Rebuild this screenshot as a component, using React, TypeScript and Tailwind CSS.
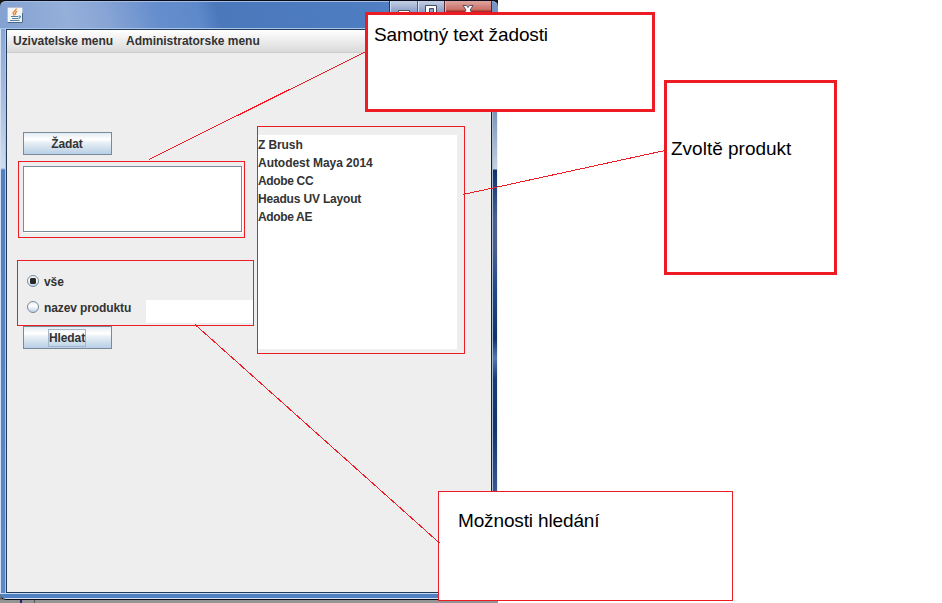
import type { ReactNode } from "react";

const products = [
  { name: "Z Brush", tracking: "tracking-[-0.1px]" },
  { name: "Autodest Maya 2014", tracking: "tracking-[-0.04px]" },
  { name: "Adobe CC", tracking: "tracking-[-0.35px]" },
  { name: "Headus UV Layout", tracking: "tracking-[-0.18px]" },
  { name: "Adobe AE", tracking: "tracking-[-0.35px]" },
];

function JavaIcon() {
  return (
    <svg className="ml-[7px] mt-[6px] h-[16px] w-[16px] shrink-0" viewBox="0 0 16 16" fill="none">
      <rect x=".5" y=".5" width="15" height="15" rx="1" fill="#f4f5f6" stroke="#b4c0cf" />
      <path d="M.5 15.5h15M15.5 6v9" stroke="#476782" />
      <path d="M9.3 1.5C9.6 3.8 5.8 4.4 6.1 6.6L7.5 8.5M10.3 4.3C8 5.3 8 6.5 8.8 7.8" stroke="#ed8730" strokeWidth="1.4" />
      <path d="M4 9.5h7.3M5 11.5h6M3 13.5h9.5M11.7 9c2.7-.3 1.9 2-.2 2.6" stroke="#54809f" strokeWidth="1.1" />
    </svg>
  );
}

function TitleBar() {
  return (
    <header className="flex h-[29px] shrink-0 justify-between rounded-t-[6px] border-t border-[#080b1b] bg-[linear-gradient(75deg,#82a1d2_0%,#95afd9_14%,#86a4d5_22%,#658ecd_32%,#5e89ca_40%,#4b78bb_44%,#4f7dc2_75%,#7894c7_100%)] shadow-[inset_0_1px_0_#a5bddf,inset_0_-1px_0_#a9c7e9]">
      <JavaIcon />
      <div className="mr-[6px] flex h-[18px] text-white">
        <div className="flex w-[28px] justify-center border-l border-[#263653] bg-[linear-gradient(#c4cfe4,#899fc5_60%,#647fac)] shadow-[inset_1px_0_0_#d3def0]">
          <svg className="h-[18px] w-[14px]" viewBox="0 0 14 18"><path d="M1.5 9.5h11v4h-11z" fill="white" stroke="#4c5564" /></svg>
        </div>
        <div className="flex w-[27px] justify-center border-l border-[#52617e] bg-[linear-gradient(#c4cfe4,#899fc5_60%,#647fac)] shadow-[inset_1px_0_0_#d3def0]">
          <svg className="h-[18px] w-[14px]" viewBox="0 0 14 18"><path d="M1.5 4.5h11v10h-11z" fill="white" stroke="#454e61" /><path d="M5.5 7.5h4v4h-4z" fill="#8ba0c4" stroke="#454e61" /></svg>
        </div>
        <div className="flex w-[48px] justify-center border-x border-[#542736] bg-[linear-gradient(#dda69f,#c96d64_50%,#a92e27_55%)] shadow-[inset_1px_0_0_#e5b9b3]">
          <svg className="h-[18px] w-[14px]" viewBox="0 0 14 18"><path d="M2 4.5h3.5L7 6.5l1.5-2H12L9.2 9l3 5H8.5L7 11.5 5.5 14H2l3-5z" fill="white" stroke="#545260" /></svg>
        </div>
      </div>
    </header>
  );
}

function MetalButton({ children, focused = false }: { children: ReactNode; focused?: boolean }) {
  return (
    <button className="flex h-[23px] w-[89px] shrink-0 items-center justify-center border border-[#7a8a99] bg-[linear-gradient(#e2ebf3_0%,#ffffff_30%,#e4edf4_50%,#b8cfe5_100%)] pr-px tracking-[-0.1px]">
      <span className={focused ? "flex h-[18px] w-[38px] items-center justify-center border border-[#a3b8cc]" : ""}>{children}</span>
    </button>
  );
}

function Radio({ label, checked = false }: { label: string; checked?: boolean }) {
  return (
    <label className="flex h-[18px] items-center gap-[5px] tracking-[-0.11px]">
      <svg className="h-[12px] w-[12px]" viewBox="0 0 12 12">
        <defs><linearGradient id={checked ? "selectedFace" : "emptyFace"} x1="0" y1="0" x2="0" y2="1"><stop stopColor="#e3ecf4" /><stop offset=".4" stopColor="#fff" /><stop offset="1" stopColor="#b8cfe5" /></linearGradient></defs>
        <circle cx="6" cy="6" r="5.5" fill={checked ? "url(#selectedFace)" : "url(#emptyFace)"} stroke="#7a8a99" />
        {checked && <path d="M4 3h4l1 1v4L8 9H4L3 8V4z" fill="#292929" />}
      </svg>
      <span className="pt-[2px]">{label}</span>
    </label>
  );
}

function Annotations() {
  return (
    <>
      <div className="absolute left-[18px] top-[161px] h-[77px] w-[227px] border border-[#ed1c24]" />
      <div className="absolute left-[17px] top-[260px] h-[66px] w-[237px] border border-[#ed1c24]" />
      <div className="absolute left-[257px] top-[126px] h-[228px] w-[208px] border border-[#ed1c24]" />
      <div className="absolute left-[365px] top-[12px] h-[100px] w-[290px] border-[3px] border-[#ed1c24] bg-white pl-[6px] pt-[8px]"><span className="whitespace-nowrap tracking-[-0.12px]">Samotný text žadosti</span></div>
      <div className="absolute left-[664px] top-[80px] h-[195px] w-[173px] border-[3px] border-[#ed1c24] bg-white pl-[4px] pt-[54px]"><span className="whitespace-nowrap">Zvoltě produkt</span></div>
      <div className="absolute left-[438px] top-[491px] h-[110px] w-[295px] border border-[#ed1c24] bg-white pl-[19px] pt-[17px]"><span className="whitespace-nowrap tracking-[-0.14px]">Možnosti hledání</span></div>
      <svg className="pointer-events-none absolute inset-0 h-[603px] w-[942px]" viewBox="0 0 942 603" shapeRendering="crispEdges" stroke="#ed1c24">
        <path d="M366 51.5L149 159.5M463 194.5L665 150.5M195 324.5L439.5 543" />
      </svg>
    </>
  );
}

export default function App() {
  return (
    <div className="relative h-[603px] w-[942px] overflow-hidden bg-white text-[19px] leading-[24px] text-black [font-family:'Liberation_Sans',Arial,sans-serif]">
      <div className="h-[603px] w-[498px] bg-[linear-gradient(#161616_0_10px,#fff_10px_590px,#646464_598px,#999_603px)]">
        <section className="flex h-[600px] flex-col overflow-hidden rounded-[6px] text-[12px] font-bold leading-[18px] text-[#333]">
          <TitleBar />
          <div className="flex h-[564px] shrink-0">
            <div className="w-[7px] shrink-0 border-l border-r border-l-[#d2e0f1] border-r-[#243a5b] bg-[linear-gradient(#88a7d7,#a9bddf_70px,#cedced_139px,#517fc3_141px,#5b88ca)] shadow-[inset_-1px_0_0_#a9c7e9]" />
            <main className="flex w-[484px] shrink-0 flex-col border-y border-[#243a5b] bg-[#eee]">
              <nav className="flex h-[23px] shrink-0 items-center gap-[13px] border-b border-[#ccc] bg-[linear-gradient(#fff,#dadada)] pl-[6px] text-[#333]">
                <span className="tracking-[-0.04px]">Uzivatelske menu</span><span className="tracking-[-0.02px]">Administratorske menu</span>
              </nav>
              <div className="flex pl-[16px]">
                <div className="flex w-[235px] shrink-0 flex-col pt-[79px]">
                  <MetalButton>Žadat</MetalButton>
                  <div className="mb-px mt-[11px] h-[66px] w-[219px] border border-[#7a8a99] bg-white shadow-[1px_1px_0_#fff]" />
                  <div className="ml-[4px] mt-[39px]"><Radio label="vše" checked /></div>
                  <div className="ml-[4px] mt-[8px] flex h-[24px] items-start">
                    <div className="w-[119px]"><Radio label="nazev produktu" /></div>
                    <div className="mt-[2px] h-[23px] w-[107px] bg-white" />
                  </div>
                  <div className="mt-[4px]"><MetalButton focused>Hledat</MetalButton></div>
                </div>
                <div className="mt-[82px] h-[214px] w-[199px] bg-white pt-px">
                  {products.map(({ name, tracking }) => <div className={`h-[18px] ${tracking}`} key={name}>{name}</div>)}
                </div>
              </div>
            </main>
            <div className="w-[7px] shrink-0 border-r border-r-[#e9f0fa] bg-[linear-gradient(#7e96bf,#7e96bf_85px,#c5d0e0_140px,#0e326c_141px,#4b5f91_190px,#4a5d8e_220px,#21498a_260px,#10336d_310px,#5376b6_329px,#173c79_350px,#13346c_400px,#3d5c94_470px,#6288bf)] shadow-[inset_1px_0_0_#152238,inset_2px_0_0_#a9bbcf]" />
          </div>
          <footer className="h-[7px] shrink-0 rounded-b-[6px] border-b border-[#080c16] bg-[linear-gradient(#c3d9ef_0_1px,#5180c3_1px_5px,#d4e3f2_5px)]" />
        </section>
        <div className="flex h-[3px] items-stretch bg-[#949494]"><div className="ml-[20px] w-[2px] bg-[#26255d]" /><div className="ml-[12px] w-px bg-[#555]" /></div>
      </div>
      <Annotations />
    </div>
  );
}
